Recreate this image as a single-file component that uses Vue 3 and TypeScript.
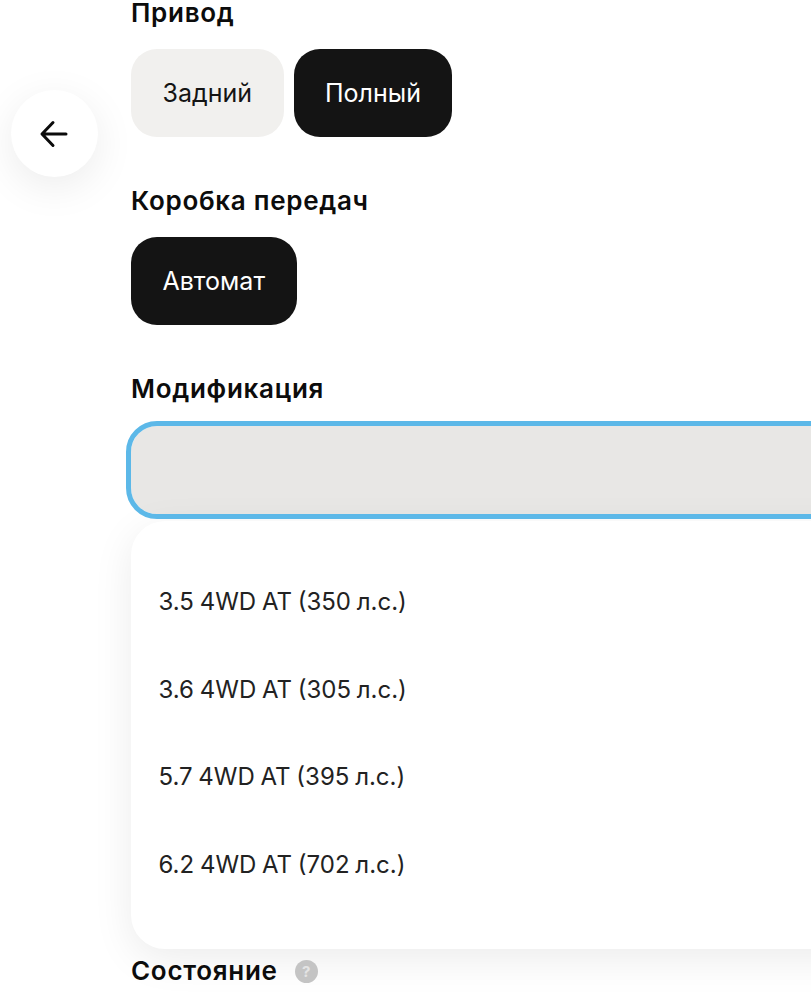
<script setup lang="ts">
const drives: { label: string; active: boolean }[] = [
  { label: 'Задний', active: false },
  { label: 'Полный', active: true },
]
const options: string[] = [
  '3.5 4WD AT (350 л.с.)',
  '3.6 4WD AT (305 л.с.)',
  '5.7 4WD AT (395 л.с.)',
  '6.2 4WD AT (702 л.с.)',
]
</script>

<template>
  <div class="page">
    <button class="back" aria-label="Назад">
      <svg width="30" height="30" viewBox="0 0 30 30" fill="none">
        <path d="M27 15H3.500M14 3.500 3 15l11 11.500" stroke="#0b0b0b" stroke-width="3" stroke-linecap="round" stroke-linejoin="round" />
      </svg>
    </button>
    <main class="form">
      <h3 class="label">Привод</h3>
      <div class="chips">
        <button v-for="d in drives" :key="d.label" class="chip" :class="{ active: d.active }">{{ d.label }}</button>
      </div>
      <h3 class="label next">Коробка передач</h3>
      <div class="chips">
        <button class="chip active">Автомат</button>
      </div>
      <h3 class="label next">Модификация</h3>
      <div class="field"></div>
      <ul class="menu">
        <li v-for="o in options" :key="o">{{ o }}</li>
      </ul>
      <h3 class="label state">
        Состояние
        <span class="hint">?</span>
      </h3>
    </main>
  </div>
</template>

<style>
html, body { margin: 0; background: #fff; overflow: hidden; }
</style>

<style scoped>
.page {
  position: relative;
  width: 811px;
  height: 1000px;
  overflow: hidden;
  background: #fff;
  font-family: Inter, "Noto Sans", sans-serif;
  color: #0c0c0c;
}
.back {
  position: absolute;
  left: 10.500px;
  top: 90px;
  width: 87px;
  height: 87px;
  padding: 0;
  border: 0;
  border-radius: 50%;
  background: #fff;
  box-shadow: 0 10px 40px rgba(0, 0, 0, 0.08);
  display: flex;
  align-items: center;
  justify-content: center;
}
.form {
  padding-left: 131px;
  width: 760px;
}
.label {
  margin: 0;
  height: 26px;
  line-height: 26px;
  font-size: 26px;
  font-weight: 600;
  letter-spacing: 0.7px;
  display: flex;
  align-items: center;
  gap: 17px;
}
.next { margin-top: 51px; }
.state { margin-top: 9px; }
.chips {
  margin-top: 23px;
  display: flex;
  gap: 10px;
}
.chip {
  height: 88px;
  padding: 0 31.500px;
  border: 0;
  border-radius: 26px;
  background: #f1f0ee;
  color: #141414;
  font: 400 25px Inter, "Noto Sans", sans-serif;
}
.chip.active {
  background: #141414;
  color: #fff;
}
.field {
  margin-top: 24px;
  height: 88px;
  border-radius: 26px;
  background: #e8e7e5;
  outline: 5px solid #5cb8e8;
  outline-offset: 0;
}
.menu {
  list-style: none;
  margin: 7px 0 0;
  padding: 37px 27.500px 41px;
  border-radius: 34px;
  background: #fff;
  box-shadow: 0 10px 40px rgba(0, 0, 0, 0.08);
}
.menu li {
  height: 87.500px;
  line-height: 87.500px;
  font-size: 24px;
  word-spacing: -1px;
  color: #222;
}
.hint {
  width: 23px;
  height: 23px;
  border-radius: 50%;
  background: #c4c4c4;
  color: #e4e4e4;
  font-size: 15px;
  font-weight: 700;
  line-height: 23px;
  letter-spacing: 0;
  text-align: center;
}
</style>
